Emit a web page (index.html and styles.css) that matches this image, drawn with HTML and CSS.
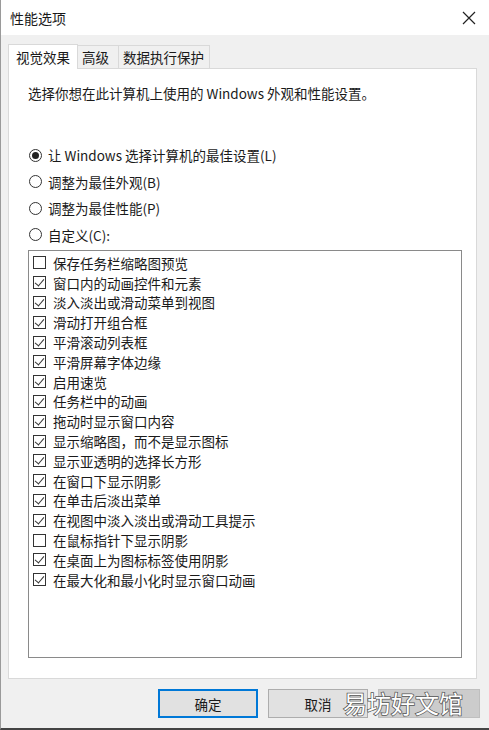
FILE: index.html
```html
<!DOCTYPE html>
<html lang="zh-CN">
<head>
    <meta charset="UTF-8">
    <title>性能选项</title>
    <link rel="stylesheet" href="styles.css">
</head>
<body>
    <div class="window">
        <div class="titlebar">
            <span class="title">性能选项</span>
            <svg class="close" width="14" height="14" viewBox="0 0 14 14">
                <path d="M1 1 L13 13 M13 1 L1 13" stroke="#222" stroke-width="1.2" fill="none"/>
            </svg>
        </div>
        <div class="content">
            <div class="tabs">
                <div class="tab active">视觉效果</div>
                <div class="tab">高级</div>
                <div class="tab">数据执行保护</div>
            </div>
            <div class="panel">
                <p class="desc">选择你想在此计算机上使用的 Windows 外观和性能设置。</p>
                <div class="radios">
                    <div class="radio checked"><span class="dot"></span>让 Windows 选择计算机的最佳设置(L)</div>
                    <div class="radio"><span class="dot"></span>调整为最佳外观(B)</div>
                    <div class="radio"><span class="dot"></span>调整为最佳性能(P)</div>
                    <div class="radio"><span class="dot"></span>自定义(C):</div>
                </div>
                <div class="listbox">
                    <div class="item"><span class="box"></span>保存任务栏缩略图预览</div>
                    <div class="item on"><span class="box"></span>窗口内的动画控件和元素</div>
                    <div class="item on"><span class="box"></span>淡入淡出或滑动菜单到视图</div>
                    <div class="item on"><span class="box"></span>滑动打开组合框</div>
                    <div class="item on"><span class="box"></span>平滑滚动列表框</div>
                    <div class="item on"><span class="box"></span>平滑屏幕字体边缘</div>
                    <div class="item on"><span class="box"></span>启用速览</div>
                    <div class="item on"><span class="box"></span>任务栏中的动画</div>
                    <div class="item on"><span class="box"></span>拖动时显示窗口内容</div>
                    <div class="item on"><span class="box"></span>显示缩略图，而不是显示图标</div>
                    <div class="item on"><span class="box"></span>显示亚透明的选择长方形</div>
                    <div class="item on"><span class="box"></span>在窗口下显示阴影</div>
                    <div class="item on"><span class="box"></span>在单击后淡出菜单</div>
                    <div class="item on"><span class="box"></span>在视图中淡入淡出或滑动工具提示</div>
                    <div class="item"><span class="box"></span>在鼠标指针下显示阴影</div>
                    <div class="item on"><span class="box"></span>在桌面上为图标标签使用阴影</div>
                    <div class="item on"><span class="box"></span>在最大化和最小化时显示窗口动画</div>
                </div>
            </div>
            <div class="buttons">
                <button class="btn default">确定</button>
                <button class="btn">取消</button>
                <button class="btn disabled"></button>
                <span class="watermark">易坊好文馆</span>
            </div>
        </div>
    </div>
</body>
</html>
```

FILE: styles.css
```css
* {
    box-sizing: border-box;
}

body {
    margin: 0;
    font-family: "Noto Sans CJK SC", "Noto Sans", sans-serif;
    font-size: 13.5px;
    color: #1a1a1a;
    background: #3a3a3a;
}

.window {
    width: 489px;
    height: 730px;
    background: #f0f0f0;
    border-left: 1px solid #9a9a9a;
    border-bottom: 2px solid #444;
    display: flex;
    flex-direction: column;
}

.titlebar {
    height: 35px;
    background: #fff;
    display: flex;
    align-items: center;
    justify-content: space-between;
    padding: 0 13px 0 9px;
}

.title {
    font-size: 14px;
    line-height: 18px;
}

.close {
    display: block;
}

.content {
    position: relative;
    flex: 1;
    padding: 8px 12px 0 7px;
}

.tabs {
    display: flex;
    height: 25px;
    align-items: flex-end;
}

.tab {
    height: 23px;
    line-height: 22px;
    padding: 0 5px 0 4px;
    background: #f0f0f0;
    border: 1px solid #d9d9d9;
    border-bottom: none;
    margin-left: -1px;
}

.tab:first-child {
    margin-left: 0;
}

.tab.active {
    height: 25px;
    line-height: 24px;
    background: #fff;
    padding: 0 7px;
    position: relative;
    z-index: 1;
    margin-bottom: -1px;
}

.tab:nth-child(2) {
    padding: 0 9px 0 4px;
}

.panel {
    height: 611px;
    background: #fff;
    border: 1px solid #d9d9d9;
    padding: 0 14px 0 19px;
}

.desc {
    margin: 15px 0 0;
    line-height: 18px;
}

.radios {
    margin-top: 40px;
}

.radio {
    display: flex;
    align-items: center;
    height: 26.5px;
    line-height: 18px;
}

.dot {
    width: 13px;
    height: 13px;
    border: 1px solid #333;
    border-radius: 50%;
    margin: 0 6px 0 1px;
    display: flex;
    align-items: center;
    justify-content: center;
}

.radio.checked .dot::after {
    content: "";
    width: 7px;
    height: 7px;
    border-radius: 50%;
    background: #222;
}

.listbox {
    margin-top: 2px;
    height: 408px;
    border: 1px solid #8a8a8a;
    padding: 2px 0 0 4px;
}

.item {
    display: flex;
    align-items: center;
    height: 19.8px;
    line-height: 18px;
}

.box {
    width: 13px;
    height: 13px;
    border: 1px solid #333;
    margin-right: 7px;
    position: relative;
}

.item.on .box::after {
    content: "";
    position: absolute;
    left: 3px;
    top: 0px;
    width: 4px;
    height: 8px;
    border-right: 1.3px solid #333;
    border-bottom: 1.3px solid #333;
    transform: rotate(40deg);
}

.buttons {
    position: relative;
    display: flex;
    justify-content: flex-end;
    gap: 10px;
    padding: 10px 0 0;
    margin-right: -3px;
}

.btn {
    width: 100px;
    height: 29px;
    font-family: inherit;
    font-size: 13.5px;
    color: #1a1a1a;
    background: #e1e1e1;
    border: 1px solid #adadad;
    padding: 0;
}

.btn.default {
    border: 2px solid #0078d7;
}

.btn.disabled {
    width: 102px;
    background: #cccccc;
    border-color: #bfbfbf;
}

.watermark {
    position: absolute;
    left: 335px;
    top: 10px;
    font-size: 24px;
    line-height: 28px;
    color: #fff;
    -webkit-text-stroke: 1.5px #555;
    paint-order: stroke fill;
}
```
